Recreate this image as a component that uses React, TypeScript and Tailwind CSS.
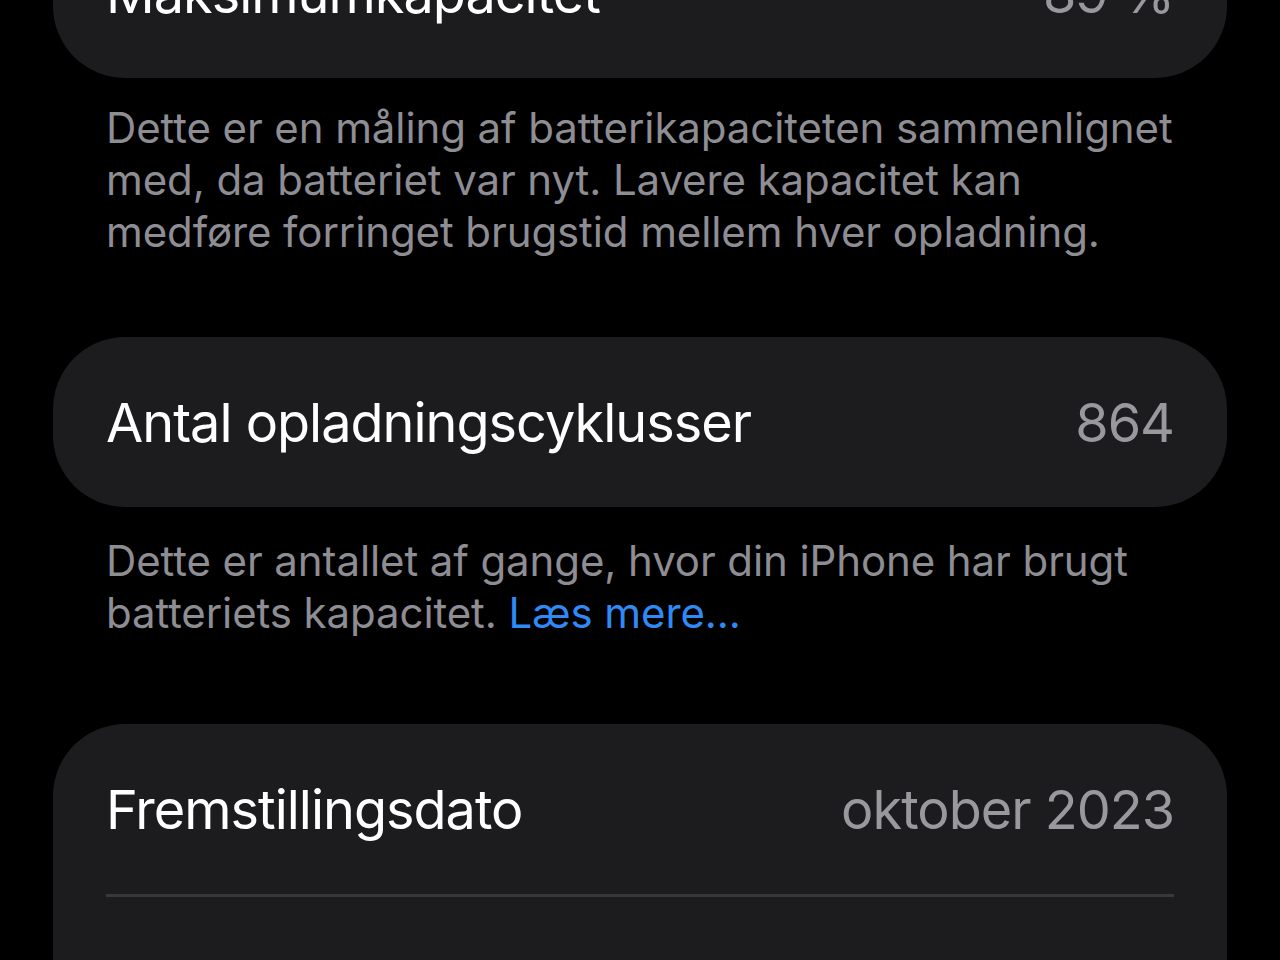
import React from "react";

type Row = { label: string; value: string };

function Card({ rows, className = "" }: { rows: Row[]; className?: string }) {
  return (
    <div className={"mx-[53px] rounded-[72px] bg-[#1c1c1e] px-[53px] " + className}>
      {rows.map((row, i) => (
        <div key={row.label}>
          {i > 0 && <div className="h-[3px] bg-[#38383a]" />}
          <div className="flex h-[170px] items-center justify-between text-[54px] tracking-[-1px]">
            <span className="text-white">{row.label}</span>
            <span className="text-[#98989d]">{row.value}</span>
          </div>
        </div>
      ))}
    </div>
  );
}

function Footer({ children, className = "mt-[24px] mb-[79px]" }: { children: React.ReactNode; className?: string }) {
  return (
    <p className={"ml-[106px] mr-[60px] text-[42px] leading-[52px] tracking-[-0.1px] text-[#8d8d93] " + className}>
      {children}
    </p>
  );
}

export default function App() {
  return (
    <div
      className="h-[960px] overflow-hidden bg-black"
      style={{ fontFamily: "Inter, 'Noto Sans', sans-serif" }}
    >
      <Card className="-mt-[92px]" rows={[{ label: "Maksimumkapacitet", value: "89 %" }]} />
      <Footer>
        Dette er en måling af batterikapaciteten sammenlignet
        <br />
        med, da batteriet var nyt. Lavere kapacitet kan
        <br />
        medføre forringet brugstid mellem hver opladning.
      </Footer>
      <Card rows={[{ label: "Antal opladningscyklusser", value: "864" }]} />
      <Footer className="mt-[28px] mb-[85px]">
        Dette er antallet af gange, hvor din iPhone har brugt
        <br />
        batteriets kapacitet. <span className="text-[#2f8af5]">Læs mere...</span>
      </Footer>
      <Card
        rows={[
          { label: "Fremstillingsdato", value: "oktober 2023" },
          { label: "Første brug", value: "november 2023" },
        ]}
      />
    </div>
  );
}
